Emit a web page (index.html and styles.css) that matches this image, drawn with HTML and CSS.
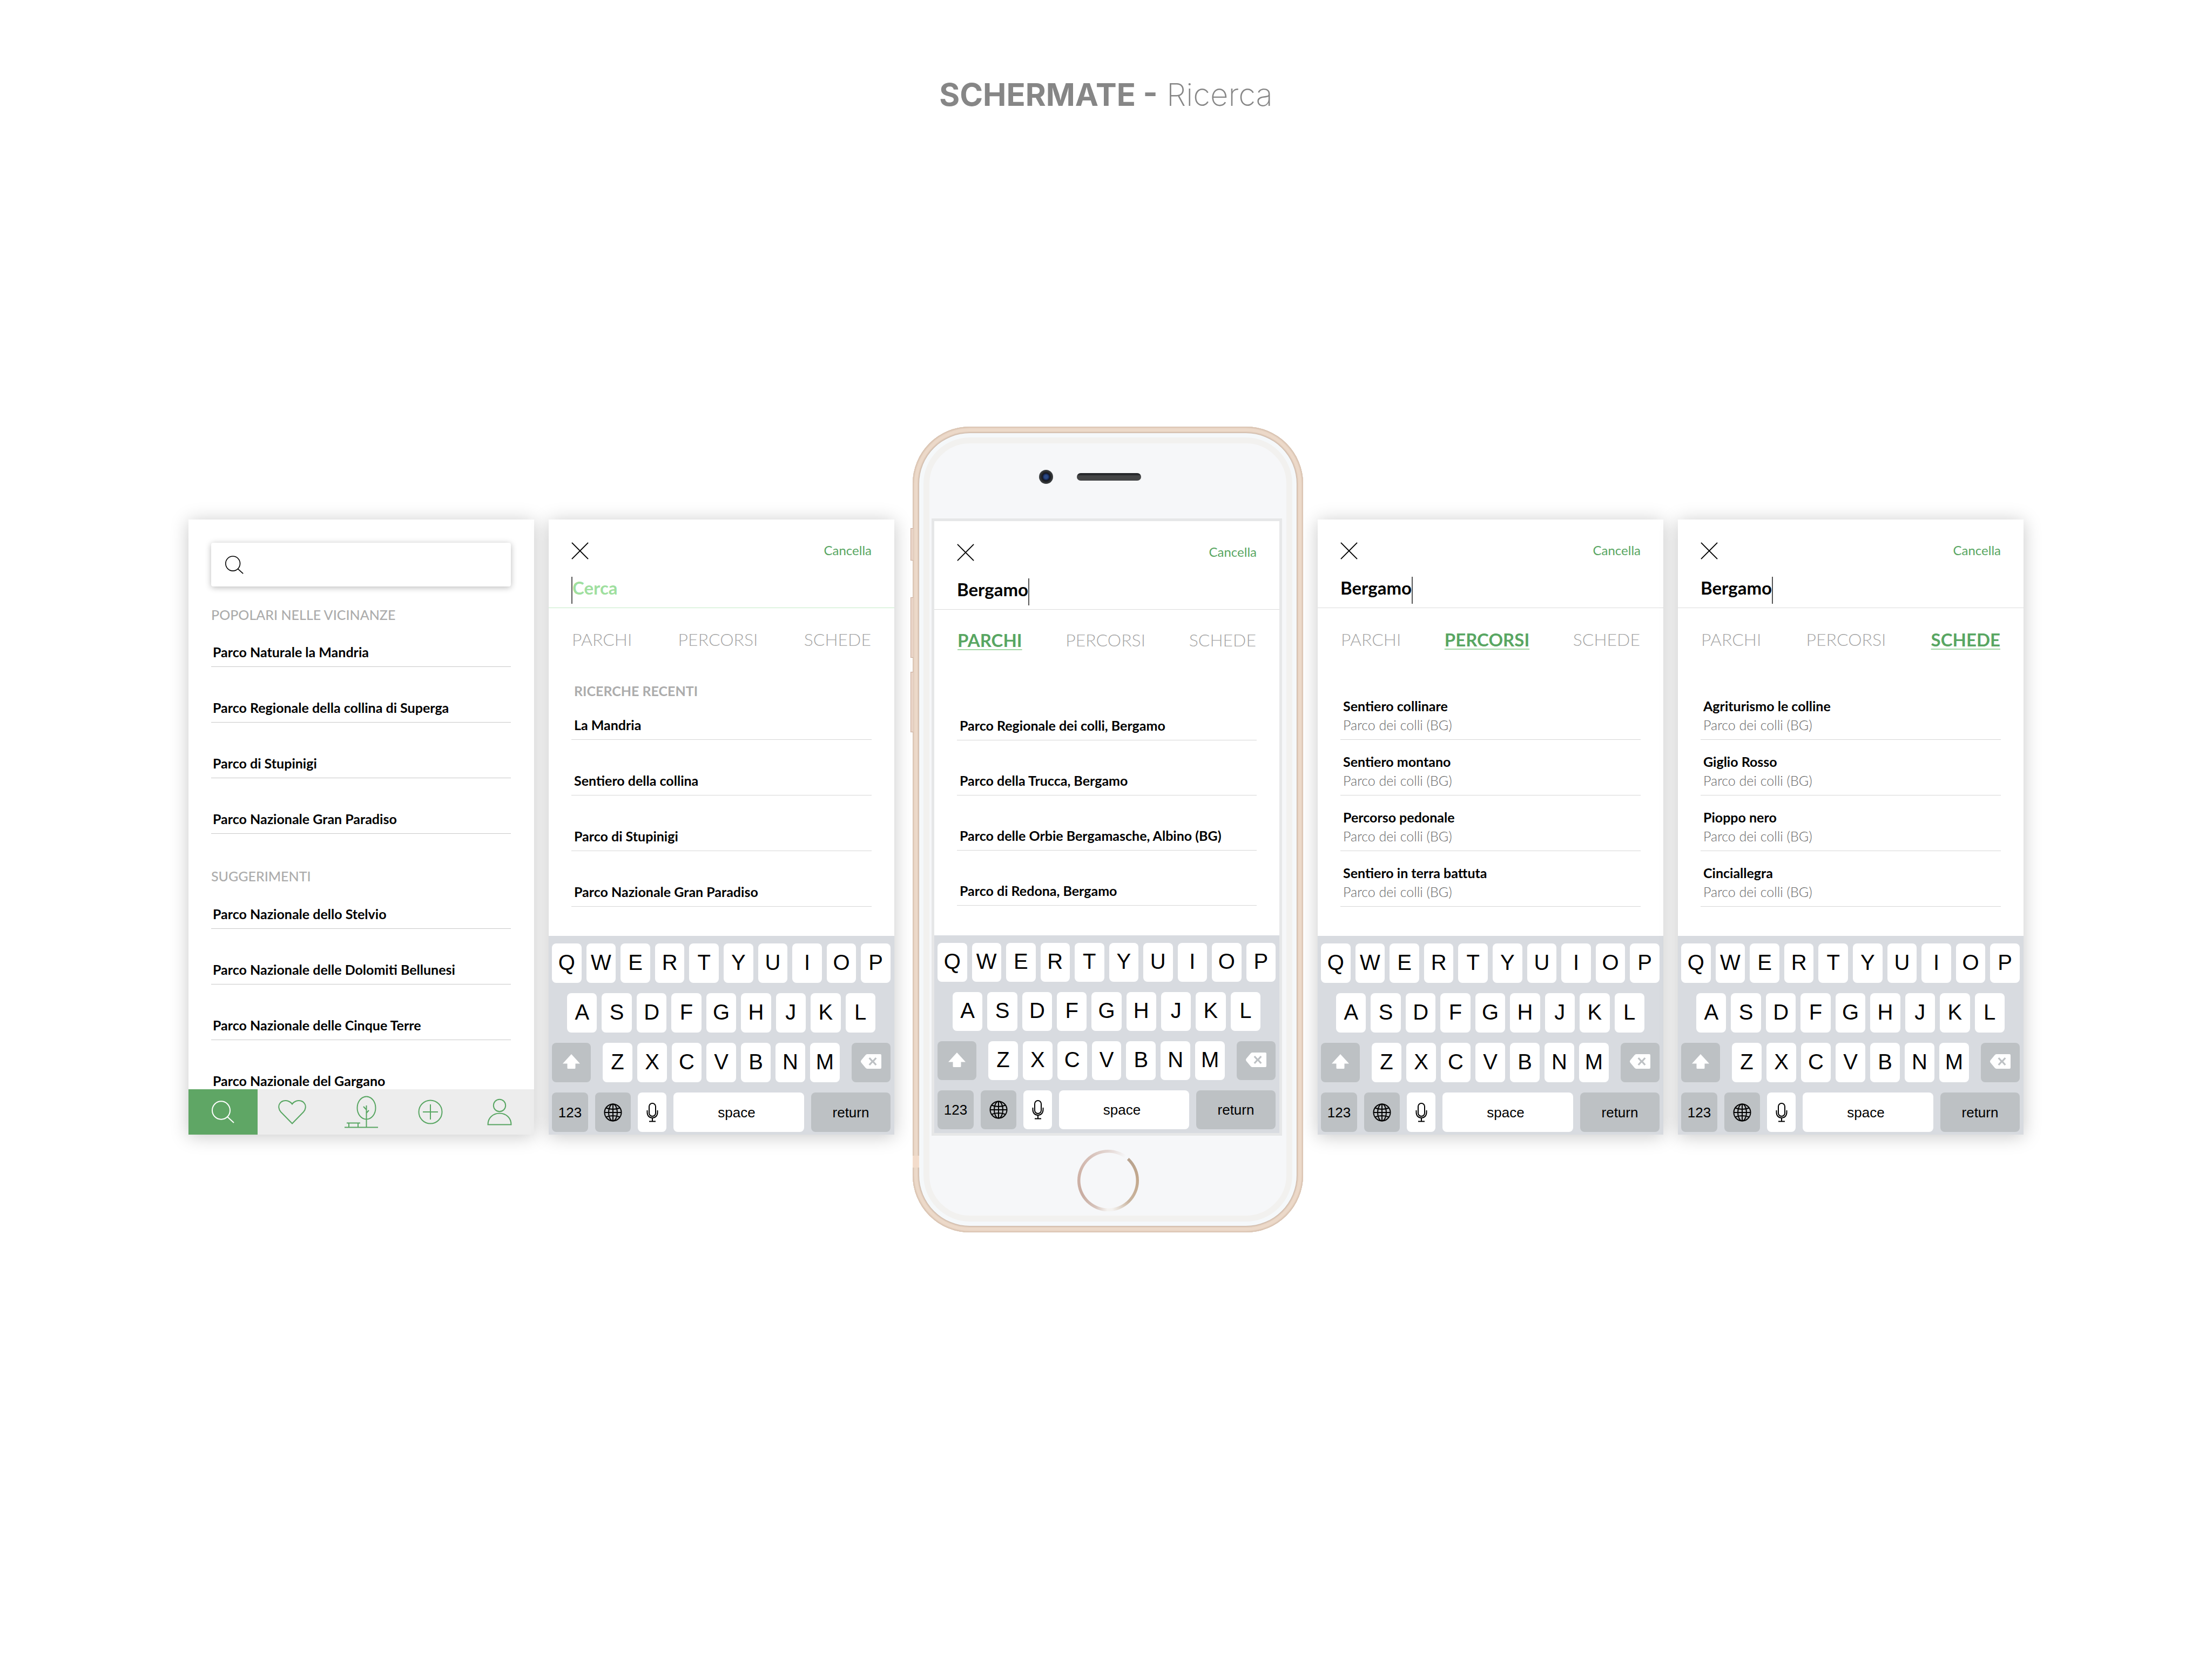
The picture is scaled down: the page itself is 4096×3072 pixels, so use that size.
FILE: index.html
```html
<!DOCTYPE html>
<html lang="it">
<head>
<meta charset="utf-8">
<meta name="viewport" content="width=device-width, initial-scale=1">
<title>Schermate - Ricerca</title>
<link rel="stylesheet" href="styles.css">
</head>
<body>
<svg class="symbols" aria-hidden="true">
  <symbol id="i-search" viewBox="0 0 42 42"><ellipse cx="17.500" cy="18" rx="16.500" ry="16.700"/><path d="M29 30L41 41"/></symbol>
  <symbol id="i-close" viewBox="0 0 34 34"><path d="M1 1L33 33M33 1L1 33"/></symbol>
  <symbol id="i-heart" viewBox="0 0 52 46"><path d="M26 44.500L5 23C1 18.500 0 12 3 7.500C6 2.500 13 0.500 19 3C22 4.200 24.500 6 26 8.500C27.500 6 30 4.200 33 3C39 0.500 46 2.500 49 7.500C52 12 51 18.500 47 23Z"/></symbol>
  <symbol id="i-park" viewBox="0 0 64 60"><ellipse cx="41.500" cy="22.500" rx="17" ry="21"/><path d="M41.500 18V58M36 20L41.500 26M46 27L41.500 32M1 58.500H63M5 50.500H30M9 50.500V58M26 50.500V58"/></symbol>
  <symbol id="i-add" viewBox="0 0 46 46"><circle cx="23" cy="23" r="21.500"/><path d="M9 23H37M23 9V37"/></symbol>
  <symbol id="i-user" viewBox="0 0 46 50"><circle cx="23" cy="13" r="11.200"/><path d="M1.500 48.500C1.500 36 11 27.500 23 27.500S44.500 36 44.500 48.500Z"/></symbol>
  <symbol id="i-shift" viewBox="0 0 32 27"><path d="M16 0L32 17.500H23.500V25.500Q23.500 27 22 27H10Q8.500 27 8.500 25.500V17.500H0Z"/></symbol>
  <symbol id="i-back" viewBox="0 0 38 27"><path fill-rule="evenodd" d="M12 0H36Q38 0 38 2V25Q38 27 36 27H12Q10 27 8.500 25L1 16Q-1 13.500 1 11L8.500 2Q10 0 12 0ZM17 6L14.500 8L19.500 13.500L14.500 19L17 21L22 15.500L27 21L29.500 19L24.500 13.500L29.500 8L27 6L22 11.500Z"/></symbol>
  <symbol id="i-globe" viewBox="0 0 34 34"><circle cx="17" cy="17" r="15.500"/><ellipse cx="17" cy="17" rx="8" ry="15.500"/><path d="M17 1.500V32.500M1.500 17H32.500M4 8.500Q17 13.500 30 8.500M4 25.500Q17 20.500 30 25.500"/></symbol>
  <symbol id="i-mic" viewBox="0 0 22 36"><rect x="5" y="1" width="12" height="24" rx="6"/><path d="M1.500 14V18C1.500 24 5.500 28 11 28S20.500 24 20.500 18V14M11 28V34.500M5 34.500H17"/></symbol>
</svg>

<template id="keyboard">
  <div class="keys keys-top"><button>Q</button><button>W</button><button>E</button><button>R</button><button>T</button><button>Y</button><button>U</button><button>I</button><button>O</button><button>P</button></div>
  <div class="keys keys-home"><button>A</button><button>S</button><button>D</button><button>F</button><button>G</button><button>H</button><button>J</button><button>K</button><button>L</button></div>
  <div class="keys keys-low"><button class="mod shift" aria-label="shift"><svg class="glyph-shift"><use href="#i-shift"/></svg></button><button>Z</button><button>X</button><button>C</button><button>V</button><button>B</button><button>N</button><button>M</button><button class="mod erase" aria-label="delete"><svg class="glyph-back"><use href="#i-back"/></svg></button></div>
  <div class="keys keys-base"><button class="mod">123</button><button class="mod" aria-label="keyboard language"><svg class="glyph-globe"><use href="#i-globe"/></svg></button><button aria-label="dictate"><svg class="glyph-mic"><use href="#i-mic"/></svg></button><button class="space">space</button><button class="mod">return</button></div>
</template>

<main class="board">
  <h1 class="title"><strong>SCHERMATE -</strong> Ricerca</h1>

  <div class="screens">
    <section class="card home" aria-label="Ricerca">
      <div class="home-body">
        <label class="searchbox"><svg class="searchbox-icon" aria-hidden="true"><use href="#i-search"/></svg><input type="search" aria-label="Cerca"></label>
        <h2 class="heading">POPOLARI NELLE VICINANZE</h2>
        <ul class="list">
          <li>Parco Naturale la Mandria</li>
          <li>Parco Regionale della collina di Superga</li>
          <li>Parco di Stupinigi</li>
          <li>Parco Nazionale Gran Paradiso</li>
        </ul>
        <h2 class="heading heading-next">SUGGERIMENTI</h2>
        <ul class="list list-cut">
          <li>Parco Nazionale dello Stelvio</li>
          <li>Parco Nazionale delle Dolomiti Bellunesi</li>
          <li>Parco Nazionale delle Cinque Terre</li>
          <li>Parco Nazionale del Gargano</li>
        </ul>
      </div>
      <nav class="navbar">
        <a class="current" href="#cerca" aria-label="Cerca"><svg class="nav-search"><use href="#i-search"/></svg></a>
        <a href="#preferiti" aria-label="Preferiti"><svg class="nav-heart"><use href="#i-heart"/></svg></a>
        <a href="#parchi" aria-label="Parchi"><svg class="nav-park"><use href="#i-park"/></svg></a>
        <a href="#aggiungi" aria-label="Aggiungi"><svg class="nav-add"><use href="#i-add"/></svg></a>
        <a href="#profilo" aria-label="Profilo"><svg class="nav-user"><use href="#i-user"/></svg></a>
      </nav>
    </section>

    <section class="card" aria-label="Ricerche recenti">
      <header class="query query-empty">
        <div class="query-actions"><button class="close" aria-label="Chiudi"><svg><use href="#i-close"/></svg></button><button class="clear">Cancella</button></div>
        <div class="field"><span class="caret"></span><input type="text" placeholder="Cerca" aria-label="Cerca"></div>
      </header>
      <nav class="tabs"><a href="#parchi">PARCHI</a><a href="#percorsi">PERCORSI</a><a href="#schede">SCHEDE</a></nav>
      <div class="results">
        <h2 class="heading heading-recent">RICERCHE RECENTI</h2>
        <ul class="list list-recent">
          <li>La Mandria</li>
          <li>Sentiero della collina</li>
          <li>Parco di Stupinigi</li>
          <li>Parco Nazionale Gran Paradiso</li>
        </ul>
      </div>
      <div class="keyboard"></div>
    </section>

    <div class="phone">
      <span class="side side-mute"></span><span class="side side-up"></span><span class="side side-down"></span><span class="band"></span>
      <div class="phone-face">
        <div class="phone-top"><span class="camera"></span><span class="speaker"></span></div>
        <section class="display" aria-label="Parchi">
          <header class="query">
            <div class="query-actions"><button class="close" aria-label="Chiudi"><svg><use href="#i-close"/></svg></button><button class="clear">Cancella</button></div>
            <div class="field"><input type="text" value="Bergamo" aria-label="Cerca"><span class="caret"></span></div>
          </header>
          <nav class="tabs"><a class="current" href="#parchi">PARCHI</a><a href="#percorsi">PERCORSI</a><a href="#schede">SCHEDE</a></nav>
          <div class="results">
            <ul class="list list-plain">
              <li>Parco Regionale dei colli, Bergamo</li>
              <li>Parco della Trucca, Bergamo</li>
              <li>Parco delle Orbie Bergamasche, Albino (BG)</li>
              <li>Parco di Redona, Bergamo</li>
            </ul>
          </div>
          <div class="keyboard"></div>
        </section>
        <div class="phone-bottom"><button class="home-button" aria-label="Home"></button></div>
      </div>
    </div>

    <section class="card" aria-label="Percorsi">
      <header class="query">
        <div class="query-actions"><button class="close" aria-label="Chiudi"><svg><use href="#i-close"/></svg></button><button class="clear">Cancella</button></div>
        <div class="field"><input type="text" value="Bergamo" aria-label="Cerca"><span class="caret"></span></div>
      </header>
      <nav class="tabs"><a href="#parchi">PARCHI</a><a class="current" href="#percorsi">PERCORSI</a><a href="#schede">SCHEDE</a></nav>
      <div class="results">
        <ul class="list list-double">
          <li>Sentiero collinare<small>Parco dei colli (BG)</small></li>
          <li>Sentiero montano<small>Parco dei colli (BG)</small></li>
          <li>Percorso pedonale<small>Parco dei colli (BG)</small></li>
          <li>Sentiero in terra battuta<small>Parco dei colli (BG)</small></li>
        </ul>
      </div>
      <div class="keyboard"></div>
    </section>

    <section class="card" aria-label="Schede">
      <header class="query">
        <div class="query-actions"><button class="close" aria-label="Chiudi"><svg><use href="#i-close"/></svg></button><button class="clear">Cancella</button></div>
        <div class="field"><input type="text" value="Bergamo" aria-label="Cerca"><span class="caret"></span></div>
      </header>
      <nav class="tabs"><a href="#parchi">PARCHI</a><a href="#percorsi">PERCORSI</a><a class="current" href="#schede">SCHEDE</a></nav>
      <div class="results">
        <ul class="list list-double">
          <li>Agriturismo le colline<small>Parco dei colli (BG)</small></li>
          <li>Giglio Rosso<small>Parco dei colli (BG)</small></li>
          <li>Pioppo nero<small>Parco dei colli (BG)</small></li>
          <li>Cinciallegra<small>Parco dei colli (BG)</small></li>
        </ul>
      </div>
      <div class="keyboard"></div>
    </section>
  </div>
</main>
<script src="keyboard.js"></script>
</body>
</html>
```

FILE: keyboard.js
```js
// Every screen with a text field shares the same on-screen keyboard.
const layout = document.getElementById('keyboard');
document.querySelectorAll('.keyboard').forEach((slot) => {
  slot.append(layout.content.cloneNode(true));
});
```

FILE: styles.css
```css
* { box-sizing: border-box; }

body {
  margin: 0;
  background: #fff;
  color: #000;
  font-family: Lato, "Open Sans", sans-serif;
  font-size: 25px;
  line-height: 30px;
}

h1, h2, ul { margin: 0; padding: 0; font: inherit; list-style: none; }
a { color: inherit; text-decoration: none; }
button, input {
  margin: 0;
  padding: 0;
  border: 0;
  background: none;
  color: inherit;
  font: inherit;
  outline: 0;
}
svg { display: block; fill: none; stroke: currentColor; stroke-width: 2px; overflow: visible; }
.symbols { position: absolute; width: 0; height: 0; }

/* Board */
.board {
  display: grid;
  grid-template-rows: 1fr auto 1fr;
  min-height: 100vh;
}
.title {
  padding-top: 142px;
  color: #868686;
  font-family: Inter, "Open Sans", sans-serif;
  font-size: 58px;
  font-weight: 200;
  line-height: 66px;
  text-align: center;
}
.title strong { font-weight: 700; }
.screens {
  display: flex;
  justify-content: center;
  align-items: flex-start;
  gap: 27px;
}
.card {
  flex: 0 1 640px;
  margin-top: 172px;
  background: #fff;
  box-shadow: 0 3px 32px rgba(0, 0, 0, .22);
}

/* Lists */
.heading { color: #acacac; font-weight: 500; }
.list { display: grid; gap: 60px; font-weight: 700; }
.list li { padding: 0 5px 12px; border-bottom: 1px solid #d6d6d6; }
.list small { display: block; margin-top: 5px; color: #666; font-size: 25px; font-weight: 300; }

/* Home screen */
.home-body { padding: 43px 43px 0 42px; }
.home-body .list { margin-top: 39px; }
.home-body .list li { padding-left: 3px; border-color: #c8c8c8; }
.home-body .list-cut { margin-top: 40px; }
.home-body .list-cut li:last-child { padding-bottom: 1px; border: 0; }
.home-body .heading { margin-top: 37px; }
.home-body .heading-next { margin-top: 63px; }
.searchbox {
  display: flex;
  align-items: center;
  height: 81px;
  padding: 0 26px;
  border-radius: 4px;
  background: #fff;
  box-shadow: 0 2px 12px rgba(0, 0, 0, .28);
}
.searchbox-icon { width: 34px; height: 34px; }
.searchbox input { flex: 1; min-width: 0; margin-left: 20px; }
.navbar { display: flex; background: #ededed; color: #58a662; }
.navbar a { display: flex; flex: 1; align-items: center; justify-content: center; height: 84px; }
.navbar .current { background: #5fa665; color: #fff; }
.nav-search { width: 42px; height: 42px; }
.nav-heart { width: 52px; height: 46px; }
.nav-park { width: 64px; height: 60px; }
.nav-add { width: 46px; height: 46px; }
.nav-user { width: 46px; height: 50px; }

/* Search header */
.query { padding: 42px 42px 7px; border-bottom: 1px solid #dcdcdc; }
.query-empty { border-color: #c4ebc6; }
.query-actions { display: flex; justify-content: space-between; align-items: flex-start; height: 32px; }
.close svg { width: 32px; height: 32px; }
.clear { color: #58a662; font-size: 24px; font-weight: 400; }
.field { display: flex; height: 50px; margin-top: 32px; font-size: 33px; font-weight: 700; }
.field input { height: 40px; field-sizing: content; }
.field input::placeholder { color: #9fdf9f; opacity: 1; }
.caret { width: 2px; background: #555; }

.tabs {
  display: flex;
  justify-content: space-between;
  padding: 38px 43px 0;
  color: #a6a6a6;
  font-size: 32px;
  font-weight: 300;
  line-height: 40px;
}
.tabs .current {
  color: #58a662;
  font-size: 33px;
  font-weight: 700;
  text-decoration: underline 2px #a3d7a5;
  text-underline-offset: 4px;
  text-decoration-skip-ink: none;
}

.results { padding: 0 42px 54px; }
.heading-recent { padding: 60px 5px 0; font-weight: 700; }
.list-recent { padding-top: 33px; }
.list-plain { padding-top: 123px; gap: 59px; }
.list-double { padding-top: 88px; gap: 25px; }

/* Keyboard */
.keyboard {
  display: grid;
  gap: 19px;
  padding: 14px 7px 5px 6px;
  background: #d8dbe0;
  font-family: "Liberation Sans", Arial, sans-serif;
}
.keys { display: flex; gap: 9px; }
.keys button {
  display: flex;
  flex: 1 1 0;
  min-width: 0;
  height: 73px;
  padding-bottom: 4px;
  align-items: center;
  justify-content: center;
  border-radius: 8px;
  background: #fff;
  font-size: 40px;
  line-height: 48px;
}
.keys .mod { background: #bdc1c4; }
.keys-home { padding: 0 28px; }
.keys .shift { flex: 0 0 72px; margin-right: 13px; }
.keys .erase { flex: 0 0 72px; margin-left: 13px; }
.keys-base { display: grid; grid-template-columns: 67px 66px 53px 1fr 147px; gap: 13px; }
.keys-base button { padding-bottom: 0; font-size: 26px; }
.keys-base .space { padding-right: 8px; }
.glyph-shift { width: 32px; height: 27px; fill: #fff; stroke: none; }
.glyph-back { width: 38px; height: 27px; fill: #fff; stroke: none; }
.glyph-globe { width: 34px; height: 34px; }
.glyph-mic { width: 22px; height: 36px; }

/* Phone */
.phone {
  position: relative;
  flex: 0 1 723px;
  margin-left: 7px;
  padding: 20px;
  border-radius: 106px;
  background: #f5f8fa;
  box-shadow:
    inset 0 0 0 1px #d6c0ae,
    inset 0 0 0 3px #e2cdbc,
    inset 0 0 0 9px #ecd9c9,
    inset 0 0 0 11px #e0cbba,
    inset 0 0 0 12px #cbb7a8;
}
.phone-face {
  padding: 0 8px 0 4px;
  border: 11px solid #f2f1ef;
  border-radius: 86px;
  background: #f6f7f9;
}
.phone-top { display: flex; align-items: center; gap: 44px; height: 139px; padding: 0 0 16px 199px; }
.camera {
  width: 26px;
  height: 26px;
  border-radius: 50%;
  background: radial-gradient(circle at 50% 50%, #2b4a86 0 3px, #14234c 6px, #17181c 7px, #3a3d40 12px);
}
.speaker { width: 119px; height: 14px; border-radius: 7px; background: linear-gradient(#25272a 0 3px, #444546 5px); }
.display { border: 5px solid #e6e7e8; background: #fff; }
.display .tabs { padding-top: 36px; }
.display .results { padding-bottom: 55px; }
.display .keyboard { padding-bottom: 7px; }
.display .keys button { height: 72px; }
.phone-bottom { display: flex; justify-content: center; height: 148px; padding: 26px 0 0 4px; }
.home-button {
  width: 114px;
  height: 114px;
  border-radius: 50%;
  background:
    radial-gradient(circle, #f6f7f9 0 51px, transparent 52px),
    conic-gradient(#e3d6d2, #f6f7f9 36deg 42deg, #b7a28f 43deg, #c4a98d 90deg, #c9b49f 135deg, #f4f2f0 172deg 182deg, #d6c3bb 205deg, #c9ada2 240deg, #cfb2a7 280deg, #d6bfb7 320deg, #e3d6d2);
}
.side { position: absolute; left: -4px; width: 5px; border: 1px solid #c9ab9b; border-right: 0; background: #e9d4c7; }
.side-mute { top: 188px; height: 60px; }
.side-up { top: 316px; height: 112px; }
.side-down { top: 454px; height: 112px; }
.band { position: absolute; left: 0; top: 1350px; width: 12px; height: 22px; background: #f3dccb; }
```
